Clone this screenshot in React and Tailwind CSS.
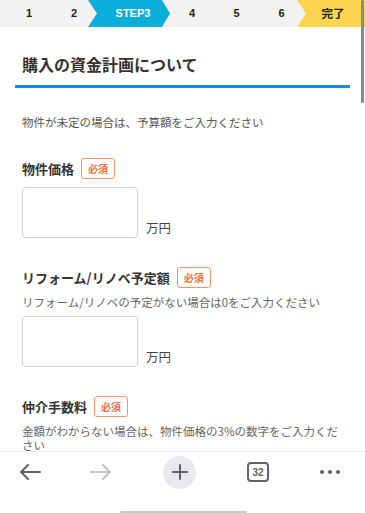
import React from 'react'

const jp = { fontFamily: '"Noto Sans CJK JP", "Noto Sans", sans-serif' }
const num = { fontFamily: '"Liberation Sans", Arial, sans-serif' }

function Badge() {
  return (
    <span className="inline-flex h-[21px] w-[34px] items-center justify-center rounded-[3px] border border-[#f8946a] bg-white text-[10px] font-bold text-[#f0703a]">
      必須
    </span>
  )
}

function Field({ label, help, first }) {
  return (
    <div className={first ? 'mt-[29px]' : 'mt-[29px]'}>
      <div className="flex h-[21px] items-center gap-[7px]">
        <span className="text-[13px] font-bold leading-none text-[#333]">{label}</span>
        <Badge />
      </div>
      {help && (
        <p className="mt-[7px] text-[11.5px] leading-[14px] text-[#666]">{help}</p>
      )}
      <div className={`flex items-end gap-[8px] ${help ? 'mt-[7px]' : 'mt-[8px]'}`}>
        <div className="h-[51px] w-[116px] rounded-[4px] border border-[#cfcfcf] bg-white" />
        <span className="text-[12.5px] leading-[20px] text-[#444]">万円</span>
      </div>
    </div>
  )
}

function StepBar() {
  return (
    <div className="flex h-[27px] items-center bg-[#f2f2f2] text-[11px] font-bold text-[#222]" style={num}>
      <div className="w-[7px]" />
      <div className="w-[44px] text-center">1</div>
      <div className="w-[37px] pl-[9px] text-center">2</div>
      <div
        className="flex h-full w-[82px] items-center justify-center bg-[#0aaed8] pl-[8px] text-white"
        style={{ clipPath: 'polygon(0 0, 74px 0, 82px 50%, 74px 100%, 0 100%, 9px 50%)' }}
      >
        STEP3
      </div>
      <div className="w-[44px] text-center">4</div>
      <div className="w-[45px] text-center">5</div>
      <div className="w-[38px] pl-[7px] text-center">6</div>
      <div
        className="flex h-full flex-1 items-center justify-center bg-[#fad54f] pl-[8px] pr-[4px] text-[11.5px]"
        style={{ ...jp, clipPath: 'polygon(0 0, 100% 0, 100% 100%, 0 100%, 9px 50%)' }}
      >
        完了
      </div>
    </div>
  )
}

function Toolbar() {
  return (
    <div className="fixed bottom-0 left-0 right-0 h-[62px] border-t border-[#ececec] bg-white">
      <div className="flex h-[40px] items-center justify-between pl-[19px] pr-[25px]">
        <svg width="22" height="16" viewBox="0 0 22 16" fill="none" stroke="#5f6368" strokeWidth="2" strokeLinecap="round" strokeLinejoin="round">
          <path d="M21 8H2M9 1L2 8l7 7" />
        </svg>
        <svg width="22" height="16" viewBox="0 0 22 16" fill="none" stroke="#c4c4c4" strokeWidth="2" strokeLinecap="round" strokeLinejoin="round" className="ml-[-2px]">
          <path d="M1 8h19M13 1l7 7-7 7" />
        </svg>
        <div className="flex h-[33px] w-[33px] items-center justify-center rounded-full bg-[#e9eaee]">
          <svg width="16" height="16" viewBox="0 0 16 16" stroke="#5f6368" strokeWidth="2" strokeLinecap="round">
            <path d="M8 1v14M1 8h14" />
          </svg>
        </div>
        <div
          className="flex h-[20px] w-[22px] items-center justify-center rounded-[4px] border-2 border-[#5f6368] text-[10px] font-bold text-[#5f6368]"
          style={num}
        >
          32
        </div>
        <div className="flex gap-[4px]">
          <span className="h-[4px] w-[4px] rounded-full bg-[#5f6368]" />
          <span className="h-[4px] w-[4px] rounded-full bg-[#5f6368]" />
          <span className="h-[4px] w-[4px] rounded-full bg-[#5f6368]" />
        </div>
      </div>
      <div className="absolute bottom-0 left-[120px] h-[2px] w-[127px] rounded-full bg-[#c8c8c8]" />
    </div>
  )
}

export default function App() {
  return (
    <div className="relative h-[513px] overflow-hidden bg-white" style={jp}>
      <StepBar />
      <div className="mx-[15px] mt-[25px] border-b-[3px] border-[#1e86dc] px-[7px] pb-[9px]">
        <h1 className="text-[16px] font-bold leading-[24px] text-[#333]">購入の資金計画について</h1>
      </div>
      <div className="px-[22px]">
        <p className="mt-[27px] text-[11.5px] leading-[14px] text-[#555]">
          物件が未定の場合は、予算額をご入力ください
        </p>
        <Field label="物件価格" first />
        <Field label="リフォーム/リノベ予定額" help="リフォーム/リノベの予定がない場合は0をご入力ください" />
        <Field label="仲介手数料" help="金額がわからない場合は、物件価格の3%の数字をご入力ください" />
      </div>
      <div className="absolute right-[1px] top-0 h-[103px] w-[3px] rounded-full bg-[#8a8a8a]" />
      <Toolbar />
    </div>
  )
}
